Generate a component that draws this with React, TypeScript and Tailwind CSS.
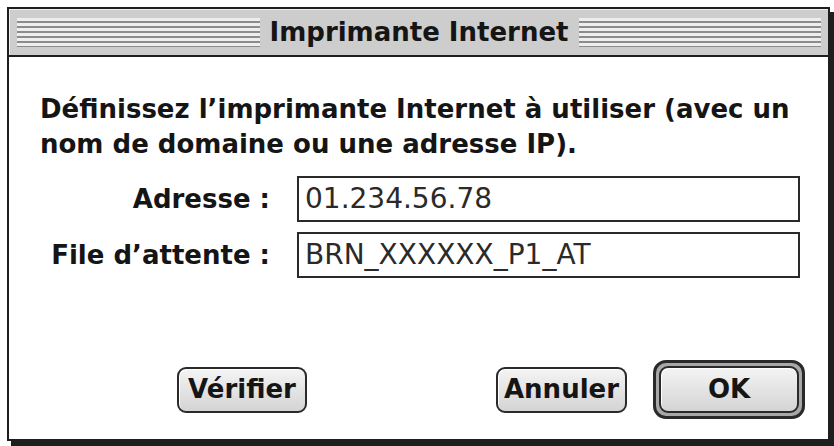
export default function App() {
  const font = "font-['DejaVu_Sans',sans-serif]";

  return (
    <div className={`w-[834px] h-[446px] bg-white pt-[7px] pl-[7px] ${font}`}>
      {/* window */}
      <div className="w-[823px] h-[434px] border-2 border-[#1e1e1e] bg-white shadow-[4px_5px_0_#1e1e1e] flex flex-col">
        {/* title bar */}
        <div className="h-[48px] shrink-0 bg-[#cdcdcd] border-b-2 border-[#1e1e1e] flex items-center pl-[8px] pr-[7px] shadow-[inset_1px_1px_0_#eeeeee]">
          <div className="flex-1 h-[29px] bg-[repeating-linear-gradient(to_bottom,#eeeeee_0px,#eeeeee_3px,#8c8c8c_3px,#8c8c8c_5px)]" />
          <div className="px-[10px] text-[26px] font-bold text-[#151515] leading-none">Imprimante Internet</div>
          <div className="flex-1 h-[29px] bg-[repeating-linear-gradient(to_bottom,#eeeeee_0px,#eeeeee_3px,#8c8c8c_3px,#8c8c8c_5px)]" />
        </div>

        {/* body */}
        <div className="flex-1 flex flex-col pt-[35px]">
          <p className="pl-[31px] text-[26px] leading-[35px] font-bold text-[#151515]">
            Définissez l’imprimante Internet à utiliser (avec un
            <br />
            nom de domaine ou une adresse IP).
          </p>

          <div className="mt-[14px] grid grid-cols-[261px_1fr] gap-x-[27px] gap-y-[10px] pr-[28px]">
            <div className="flex items-center justify-end text-[26px] font-bold text-[#151515]">Adresse :</div>
            <div className="h-[46px] border-2 border-[#2a2a2a] flex items-center pl-[6px] text-[28px] text-[#2a2a2a]">
              01.234.56.78
            </div>
            <div className="flex items-center justify-end text-[26px] font-bold text-[#151515]">File d’attente :</div>
            <div className="h-[46px] border-2 border-[#2a2a2a] flex items-center pl-[6px] text-[28px] text-[#2a2a2a]">
              BRN_XXXXXX_P1_AT
            </div>
          </div>

          <div className="mt-[82px] flex items-center pl-[168px] pr-[23px]">
            <button className="w-[130px] h-[46px] rounded-[9px] border-2 border-[#2a2a2a] bg-gradient-to-b from-[#f4f4f4] to-[#d4d4d4] shadow-[inset_1px_1px_0_#ffffff] text-[26px] font-bold text-[#151515]">
              Vérifier
            </button>
            <div className="flex-1" />
            <button className="w-[131px] h-[46px] rounded-[9px] border-2 border-[#2a2a2a] bg-gradient-to-b from-[#f4f4f4] to-[#d4d4d4] shadow-[inset_1px_1px_0_#ffffff] text-[26px] font-bold text-[#151515]">
              Annuler
            </button>
            <div className="ml-[26px] w-[152px] h-[59px] rounded-[13px] border-[3px] border-[#2a2a2a] bg-[#a8a8a8] p-[3px]">
              <button className="w-full h-full rounded-[9px] border-2 border-[#2a2a2a] bg-gradient-to-b from-[#f4f4f4] to-[#d4d4d4] shadow-[inset_1px_1px_0_#ffffff] text-[26px] font-bold text-[#151515]">
                OK
              </button>
            </div>
          </div>
        </div>
      </div>
    </div>
  );
}
